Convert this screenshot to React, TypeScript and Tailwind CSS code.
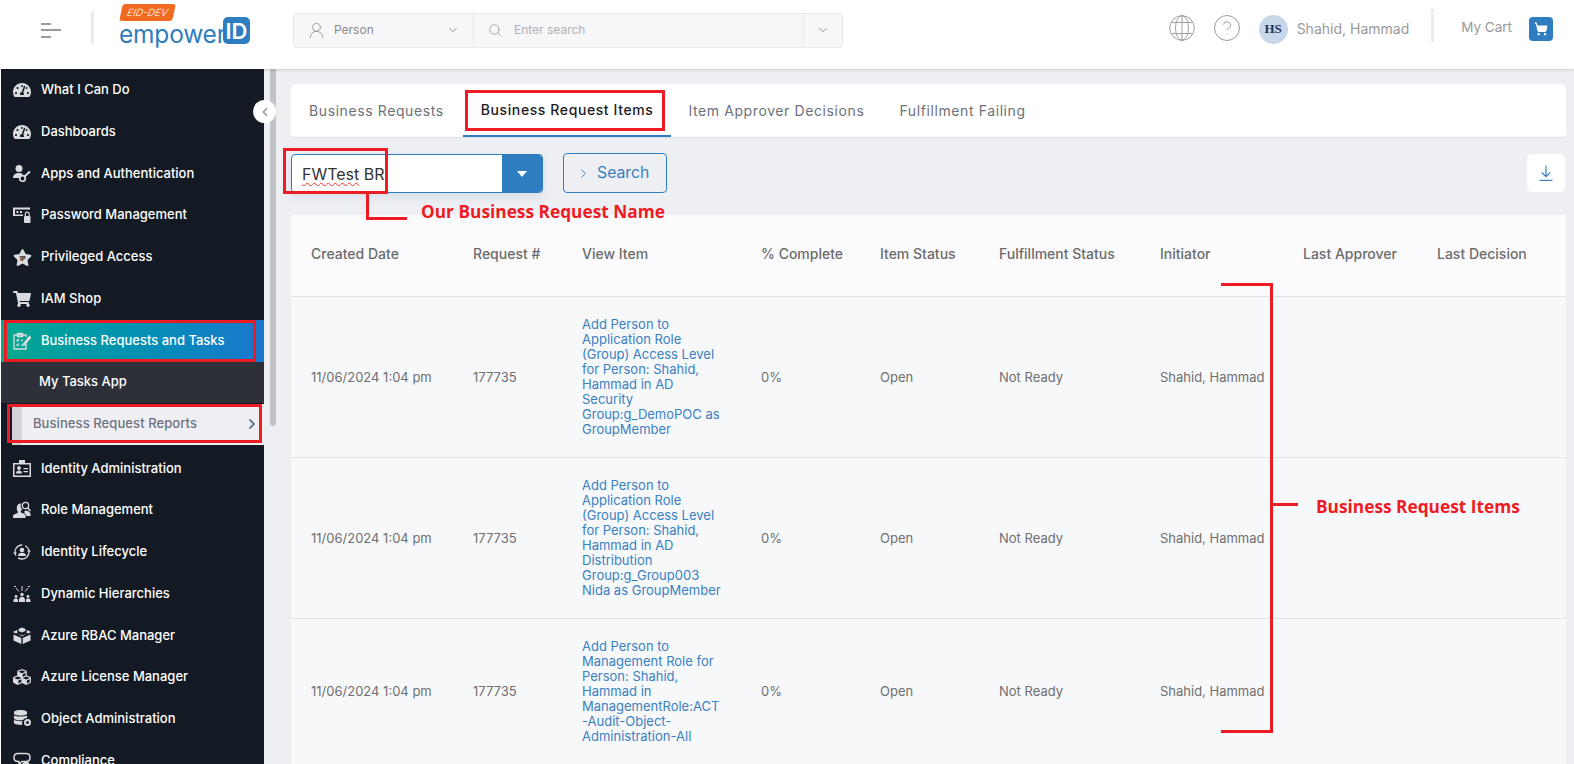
import { ChevronDown, ChevronLeft, ChevronRight, CircleHelp, Search, ShoppingCart, UserRound } from 'lucide-react'
import { FaCubes, FaDatabase, FaShoppingCart, FaStar, FaTachometerAlt } from 'react-icons/fa'
import type { ReactNode } from 'react'

const FONT = "font-['Inter','Noto_Sans',sans-serif]"

function KeyUser() {
  return (
    <svg viewBox="0 0 18 18" className="w-[18px] h-[18px]" fill="currentColor">
      <circle cx="6" cy="4.5" r="3.5" />
      <path d="M0 14c0-3.500 2.500-5 6-5 1.500 0 2.800.3 3.800.9L6 14H0z" />
      <circle cx="9.500" cy="14.500" r="2.800" fill="none" stroke="currentColor" strokeWidth="1.700" />
      <path d="M11.500 12.500 17 7.500" stroke="currentColor" strokeWidth="2" />
    </svg>
  )
}

function PasswordIcon() {
  return (
    <svg viewBox="0 0 18 18" className="w-[18px] h-[18px]" fill="currentColor">
      <path d="M0 1.500h17v2H2v5h8v1.500H0z" />
      <rect x="3.500" y="5" width="2" height="2" />
      <rect x="7" y="5" width="2" height="2" />
      <rect x="11" y="10" width="6.500" height="7" rx="1" />
      <path d="M12.300 10V8a1.900 1.900 0 0 1 3.900 0v2" fill="none" stroke="currentColor" strokeWidth="1.200" />
    </svg>
  )
}

function TasksIcon() {
  return (
    <svg viewBox="0 0 18 18" className="w-[18px] h-[18px]" fill="none" stroke="currentColor" strokeWidth="1.300">
      <path d="M13 5V3H1v14h12v-5" />
      <path d="M4.500 1.500h5v3h-5z" />
      <path d="m3.500 8 1 1 1.500-2M3.500 12.500l1 1 1.500-2M8 8.500h2M8 13h1" />
      <path d="m10.500 12 6-7.500 1 1-6 7.500-1.500.5z" fill="currentColor" />
    </svg>
  )
}

function IdCardIcon() {
  return (
    <svg viewBox="0 0 18 18" className="w-[18px] h-[18px]" fill="currentColor">
      <path d="M0 4h6V1h6v3h6v14H0zm1.500 1.500v11h15v-11z" />
      <circle cx="6" cy="9" r="1.900" />
      <path d="M3 14.500c0-2 1.200-3 3-3s3 1 3 3z" />
      <path d="M10.500 9h4.500v1.300h-4.500zM10.500 12h4.500v1.300h-4.500z" />
    </svg>
  )
}

function RoleIcon() {
  return (
    <svg viewBox="0 0 18 18" className="w-[18px] h-[18px]" fill="currentColor">
      <path d="M5 3.500c1-1 2.500-1.200 3-.6-.7 2-.4 3.800 1 5.100-.2 1-.7 1.800-1.200 2.300v1.200c2 .6 4 1.300 4.700 2.500V17H0v-2.500c1-1.300 3-2 4.800-2.600v-1.300C3.500 9 3.300 5.500 5 3.500z" />
      <circle cx="12.500" cy="4.500" r="3.200" fill="none" stroke="currentColor" strokeWidth="1.300" />
      <path d="m14.800 7 2.700 3" stroke="currentColor" strokeWidth="1.500" />
      <path d="M12.500 9.500c2 0 4 1 5 3V15h-4c-.3-1.200-1-2-2-2.600V10z" />
    </svg>
  )
}

function LifecycleIcon() {
  return (
    <svg viewBox="0 0 18 18" className="w-[18px] h-[18px]" fill="currentColor">
      <circle cx="9" cy="9" r="7" fill="none" stroke="currentColor" strokeWidth="1.300" strokeDasharray="15 3" />
      <circle cx="9" cy="7" r="2.300" />
      <path d="M5 13c0-2 1.700-3.200 4-3.200s4 1.200 4 3.200z" />
      <path d="m0 9.500 2 2 2-2zM18 8.500l-2-2-2 2z" />
    </svg>
  )
}

function HierarchyIcon() {
  return (
    <svg viewBox="0 0 18 18" className="w-[18px] h-[18px]" fill="currentColor">
      <circle cx="9" cy="9.500" r="1.700" />
      <path d="M6 15c0-2 1.300-3.300 3-3.300s3 1.300 3 3.300v2H6z" />
      <circle cx="3" cy="11.500" r="1.400" />
      <path d="M.5 17v-1.500C.5 14 1.500 13.500 3 13.500s2 .7 2 1.500v2z" />
      <circle cx="15" cy="11.500" r="1.400" />
      <path d="M13 17v-2c0-.8.500-1.500 2-1.500s2.500.5 2.500 2V17z" />
      <path d="M9 1v5M3 3l3 3.500M15 3l-3 3.500M1 1.500h2M15 1.500h2" stroke="currentColor" strokeWidth="1" />
    </svg>
  )
}

function RbacIcon() {
  return (
    <svg viewBox="0 0 18 18" className="w-[18px] h-[18px]" fill="currentColor">
      <path d="M9 1.500 12.500 3v2L9 6.500 5.500 5V3z" />
      <path d="M4 4 0 6l3 1.500 1.500-.8zM14 4l4 2-3 1.500-1.500-.8z" />
      <path d="M.5 8.500 8.300 12v6L.5 14.500zM17.500 8.500 9.700 12v6l7.800-3.500z" />
      <path d="M4.500 7.500 9 9.500l4.500-2L9 10.500z" />
    </svg>
  )
}

function ObjectIcon() {
  return (
    <span className="relative block w-[18px] h-[18px]">
      <FaDatabase size={15} />
      <span className="absolute right-[-1px] bottom-0 flex w-[10px] h-[10px] items-center justify-center rounded-full bg-[#141a24]">
        <span className="block w-[7px] h-[7px] rounded-full border-2 border-[#d9dbde]" />
      </span>
    </span>
  )
}

function BubbleIcon() {
  return (
    <svg viewBox="0 0 18 18" className="w-[18px] h-[18px]" fill="none" stroke="currentColor" strokeWidth="1.500">
      <path d="M5 1.500h8c2.500 0 4 1.800 4 4s-1.500 4-4 4H9l-3 3v-3H5c-2.500 0-4-1.800-4-4s1.500-4 4-4z" />
      <circle cx="13" cy="13" r="3.500" fill="currentColor" stroke="none" />
    </svg>
  )
}

function StarIcon() {
  return (
    <span className="relative block w-[19px] h-[18px]">
      <FaStar size={19} />
      <span className="absolute inset-0 top-[7px] text-center text-[6px] leading-[7px] font-bold text-[#141a24]">1P</span>
    </span>
  )
}

function GlobeIcon() {
  return (
    <svg viewBox="0 0 26 26" className="h-[26px] w-[26px] text-[#8a8a8a]" fill="none" stroke="currentColor" strokeWidth="0.800">
      <circle cx="13" cy="13" r="12.300" />
      <ellipse cx="13" cy="13" rx="6.500" ry="12.300" />
      <path d="M13 .7v24.600M2.500 7.500h21M2.500 18.500h21" />
    </svg>
  )
}

type NavItem = { label: string; icon: ReactNode }

const topItems: NavItem[] = [
  { label: 'What I Can Do', icon: <FaTachometerAlt size={18} /> },
  { label: 'Dashboards', icon: <FaTachometerAlt size={18} /> },
  { label: 'Apps and Authentication', icon: <KeyUser /> },
  { label: 'Password Management', icon: <PasswordIcon /> },
  { label: 'Privileged Access', icon: <StarIcon /> },
  { label: 'IAM Shop', icon: <FaShoppingCart size={18} /> },
]

const bottomItems: NavItem[] = [
  { label: 'Identity Administration', icon: <IdCardIcon /> },
  { label: 'Role Management', icon: <RoleIcon /> },
  { label: 'Identity Lifecycle', icon: <LifecycleIcon /> },
  { label: 'Dynamic Hierarchies', icon: <HierarchyIcon /> },
  { label: 'Azure RBAC Manager', icon: <RbacIcon /> },
  { label: 'Azure License Manager', icon: <FaCubes size={18} /> },
  { label: 'Object Administration', icon: <ObjectIcon /> },
  { label: 'Compliance', icon: <BubbleIcon /> },
]

function NavRow({ item }: { item: NavItem }) {
  return (
    <div className="flex h-[41.75px] shrink-0 items-center pl-[12px] text-[13px] font-medium text-white">
      <span className="flex w-[28px] items-center text-[#d9dbde]">{item.icon}</span>
      {item.label}
    </div>
  )
}

function Sidebar() {
  return (
    <aside className="ml-px flex w-[263px] shrink-0 flex-col overflow-hidden bg-[#141a24]">
      {topItems.map((item) => (
        <NavRow key={item.label} item={item} />
      ))}
      <div className="flex h-[42px] shrink-0 items-center bg-gradient-to-r from-[#07a88e] to-[#1a76cf] pl-[12px] text-[13px] font-medium text-white">
        <span className="flex w-[28px] items-center text-[#d9dbde]">
          <TasksIcon />
        </span>
        Business Requests and Tasks
      </div>
      <div className="flex h-[41px] shrink-0 items-center bg-[#2d3038] pl-[38px] text-[13px] font-medium text-white">
        My Tasks App
      </div>
      <div className="mt-px ml-[11px] flex h-[41px] shrink-0 items-center bg-[#efeff3] pr-[4px] text-[13px] font-medium tracking-[0.08px] text-[#6d7280]">
        <span className="mr-[11px] h-full w-[10px] bg-[#d4d4d8]" />
        <span className="flex-1">Business Request Reports</span>
        <ChevronRight size={16} strokeWidth={3} className="text-[#6a7a94]" />
      </div>
      <div className="h-[3px] shrink-0" />
      {bottomItems.map((item) => (
        <NavRow key={item.label} item={item} />
      ))}
    </aside>
  )
}

function Header() {
  return (
    <header className="z-10 flex h-[69px] shrink-0 items-center bg-white pb-[9px] shadow-[0_1px_3px_rgba(0,0,0,0.15)]">
      <div className="ml-[41px] flex w-[20px] flex-col gap-[4.500px]">
        <span className="h-[2px] w-[10px] bg-[#9b9b9b]" />
        <span className="h-[2px] w-[20px] bg-[#9b9b9b]" />
        <span className="h-[2px] w-[10px] bg-[#9b9b9b]" />
      </div>
      <span className="mb-[5px] ml-[30px] h-[33px] w-[3px] bg-[#ebebeb]" />
      <div className="relative ml-[25px] h-[60px] w-[131px] self-start">
        <span className="absolute left-[2px] top-[4px] flex h-[17px] w-[53px] -skew-x-12 items-center justify-center rounded-[3px] bg-[#f26a21] text-[10px] italic text-[#ffe2cf]">
          EID-DEV
        </span>
        <span className="absolute left-0 top-[19px] text-[24.500px] leading-[30px] tracking-[-0.2px] text-[#2f7dc1]">empower</span>
        <span className="absolute right-0 top-[17px] flex h-[27px] w-[27px] items-center justify-center rounded-[5px] bg-[#2f7dc1] text-[22px] leading-none font-semibold text-white">
          ID
        </span>
      </div>
      <div className="ml-[43px] flex h-[35px] w-[550px] items-center rounded-[4px] border border-[#e9e9ec] bg-[#f7f7f9] text-[12px]">
        <div className="flex h-full w-[179px] items-center pl-[13px] pr-[13px] text-[#8a8a8a]">
          <UserRound size={19} strokeWidth={1} />
          <span className="ml-[8px] flex-1">Person</span>
          <ChevronDown size={14} strokeWidth={1.500} />
        </div>
        <div className="flex h-full flex-1 items-center border-l border-[#e9e9ec] pl-[14px] text-[#b0b0b4]">
          <Search size={14} strokeWidth={1.250} className="text-[#8a8a8a]" />
          <span className="ml-[12px]">Enter search</span>
        </div>
        <div className="flex h-full w-[39px] items-center justify-center border-l border-[#e9e9ec] text-[#8a8a8a]">
          <ChevronDown size={14} strokeWidth={1.500} />
        </div>
      </div>
      <div className="ml-auto flex items-center pr-[21px]">
        <span className="mb-[4px]">
          <GlobeIcon />
        </span>
        <CircleHelp size={30} strokeWidth={0.7} className="mb-[4px] ml-[17px] text-[#8a8a8a]" />
        <span className="mb-[2px] ml-[17px] flex h-[29px] w-[29px] items-center justify-center rounded-full bg-[#c9d7ea] font-['Liberation_Serif',serif] text-[13px] font-bold text-[#1f3556]">
          HS
        </span>
        <span className="mb-[3px] ml-[9px] text-[14px] text-[#9a9a9a]">Shahid, Hammad</span>
        <span className="mb-[9px] ml-[22px] h-[33px] w-[3px] bg-[#ebebeb]" />
        <span className="mb-[5px] ml-[27px] text-[13.500px] text-[#9a9a9a]">My Cart</span>
        <span className="mb-[2px] ml-[17px] flex h-[24px] w-[24px] items-center justify-center rounded-[4px] bg-[#2f7dc1] text-white">
          <ShoppingCart size={14} fill="white" />
        </span>
      </div>
    </header>
  )
}

const columns = ['Created Date', 'Request #', 'View Item', '% Complete', 'Item Status', 'Fulfillment Status', 'Initiator', 'Last Approver', 'Last Decision']

const GRID = 'grid grid-cols-[162px_109px_179px_119px_119px_161px_143px_134px_1fr] pl-[20px]'

const rows: string[][] = [
  ['Add Person to', 'Application Role', '(Group) Access Level', 'for Person: Shahid,', 'Hammad in AD', 'Security', 'Group:g_DemoPOC as', 'GroupMember'],
  ['Add Person to', 'Application Role', '(Group) Access Level', 'for Person: Shahid,', 'Hammad in AD', 'Distribution', 'Group:g_Group003', 'Nida as GroupMember'],
  ['Add Person to', 'Management Role for', 'Person: Shahid,', 'Hammad in', 'ManagementRole:ACT', '-Audit-Object-', 'Administration-All'],
]

function Row({ lines }: { lines: string[] }) {
  return (
    <div className={`${GRID} items-center border-t border-[#e1e2e6] py-[20px] text-[13px] leading-[15px] text-[#6f6f6f]`}>
      <span>11/06/2024 1:04 pm</span>
      <span>177735</span>
      <span className="text-[#3a80c2]">
        {lines.map((line) => (
          <span key={line} className="block">
            {line}
          </span>
        ))}
      </span>
      <span>0%</span>
      <span>Open</span>
      <span>Not Ready</span>
      <span>Shahid, Hammad</span>
    </div>
  )
}

function Main() {
  return (
    <main className="flex-1 overflow-hidden bg-[#edeff3] pl-[27px] pr-[8px] pt-[15px]">
      <div className="flex h-[54px] items-stretch rounded-t-[6px] rounded-b-[4px] border-b border-[#dfe0e4] bg-white pl-[18px] text-[14px] tracking-[0.6px] text-[#6d7179]">
        <span className="flex items-center">Business Requests</span>
        <span className="relative ml-[19px] flex items-center border-b-2 border-[#2f7dc1] px-[18px] font-medium text-[#1b1b1f]">
          Business Request Items
        </span>
        <span className="ml-[17px] flex items-center">Item Approver Decisions</span>
        <span className="ml-[35px] flex items-center">Fulfillment Failing</span>
      </div>
      <div className="flex h-[77px] items-start pt-[15px]">
        <div className="mt-px flex h-[39px] w-[252px] overflow-hidden rounded-[4px] border border-[#2f7dc1] bg-white shadow-[0_4px_8px_rgba(60,90,140,0.12)]">
          <span className="flex flex-1 items-center pl-[10px] text-[16px] text-[#333]">
            <span>
              <span className="underline decoration-wavy decoration-1 decoration-[#e33] underline-offset-2">FWTest</span> BR
            </span>
          </span>
          <span className="flex w-[40px] items-center justify-center bg-[#2f7dc1]">
            <span className="h-0 w-0 border-x-[5.500px] border-t-[6px] border-x-transparent border-t-white" />
          </span>
        </div>
        <button type="button" className="ml-[20px] flex h-[40px] w-[104px] items-center justify-start gap-[6px] rounded-[4px] border border-[#2f7dc1] pl-[12px] text-[15.800px] text-[#3a80c2]">
          <ChevronRight size={15} strokeWidth={1.500} />
          Search
        </button>
        <span className="ml-auto mr-px mt-[1px] flex h-[38px] w-[38px] items-center justify-center rounded-[5px] bg-white text-[#3a80c2]">
          <svg viewBox="0 0 14 16" className="h-[16px] w-[14px]" fill="none" stroke="currentColor" strokeWidth="1.200">
            <path d="M7 .5v11M2.800 7.500 7 11.700l4.200-4.200M.5 15.300h13" />
          </svg>
        </span>
      </div>
      <div className="bg-[#f7f8fa]">
        <div className={`${GRID} h-[81px] bg-[#fbfbfd] pt-[28px] text-[14px] font-medium text-[#6b6b6b]`}>
          {columns.map((c) => (
            <span key={c}>{c}</span>
          ))}
        </div>
        {rows.map((lines, i) => (
          <Row key={i} lines={lines} />
        ))}
      </div>
    </main>
  )
}

const RED = 'absolute z-20 bg-[#ed1c24]'

function Annotations() {
  return (
    <>
      <div className="absolute left-[4px] top-[320px] z-20 h-[42px] w-[252px] border-[3px] border-[#ed1c24]" />
      <div className="absolute left-[7px] top-[404px] z-20 h-[39px] w-[255px] border-[3px] border-[#ed1c24]" />
      <div className="absolute left-[465px] top-[90px] z-20 h-[41px] w-[200px] border-[3px] border-[#ed1c24]" />
      <div className="absolute left-[283px] top-[148px] z-20 h-[46px] w-[105px] border-[3px] border-[#ed1c24]" />
      <div className={`${RED} left-[366px] top-[194px] h-[26px] w-[3px]`} />
      <div className={`${RED} left-[366px] top-[217px] h-[3px] w-[41px]`} />
      <span className="absolute left-[421px] top-[200px] z-20 font-['Open_Sans',sans-serif] text-[17.300px] leading-[24px] font-bold text-[#ed1c24]">
        Our Business Request Name
      </span>
      <div className={`${RED} left-[1221px] top-[283px] h-[3px] w-[52px]`} />
      <div className={`${RED} left-[1270px] top-[283px] h-[449px] w-[3px]`} />
      <div className={`${RED} left-[1221px] top-[730px] h-[3px] w-[52px]`} />
      <div className={`${RED} left-[1273px] top-[503px] h-[3px] w-[25px]`} />
      <span className="absolute left-[1316px] top-[495px] z-20 font-['Open_Sans',sans-serif] text-[17.300px] leading-[24px] font-bold text-[#ed1c24]">
        Business Request Items
      </span>
      <span className="absolute left-[253px] top-[100px] z-30 flex h-[23px] w-[23px] items-center justify-center rounded-full bg-white text-[#8a8a8a]">
        <ChevronLeft size={14} />
      </span>
      <span className="absolute left-[270px] top-[69px] z-0 h-[357px] w-[6px] rounded-b-[3px] bg-[#c1c3c6]" />
    </>
  )
}

export default function App() {
  return (
    <div className={`relative flex h-screen flex-col overflow-hidden bg-white ${FONT}`}>
      <Header />
      <div className="flex min-h-0 flex-1">
        <Sidebar />
        <Main />
      </div>
      <Annotations />
    </div>
  )
}
